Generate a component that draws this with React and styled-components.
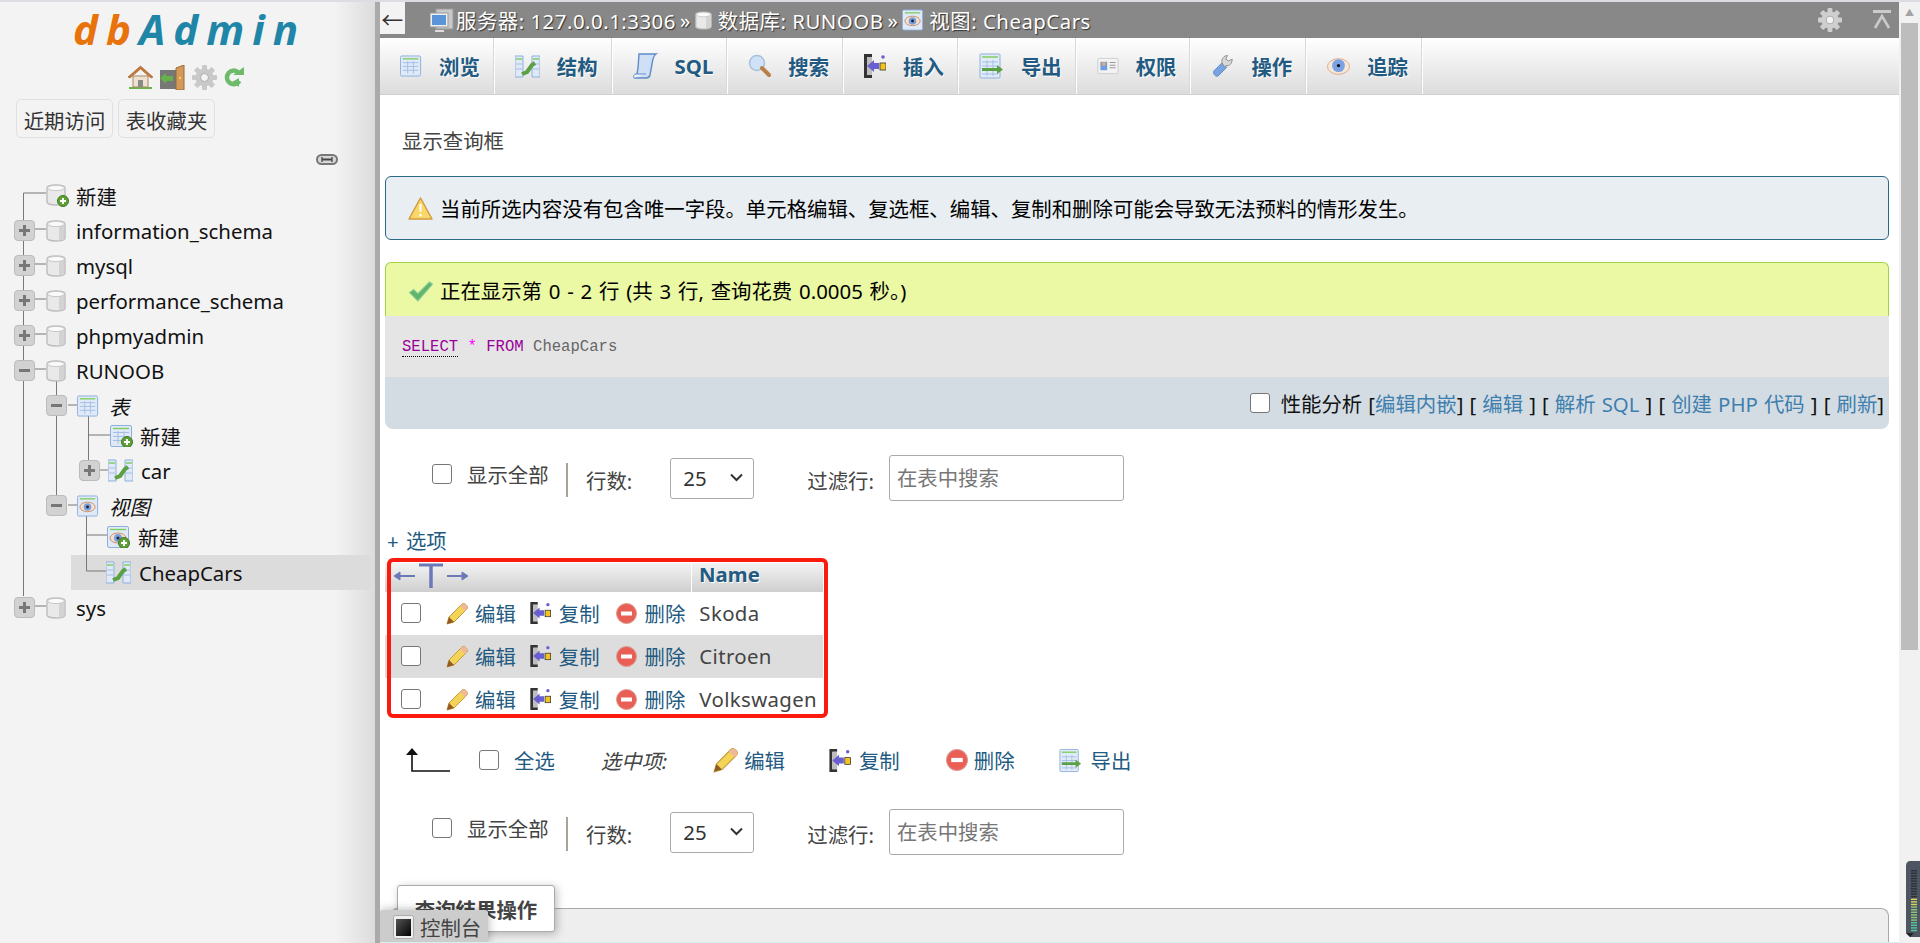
import React from "react";
import styled, { createGlobalStyle } from "styled-components";

const Global = createGlobalStyle`
  html, body { margin: 0; padding: 0; height: 100%; overflow: hidden; background: #fff; }
  * { box-sizing: border-box; }
  body { font-family: "Noto Sans", "Noto Sans CJK SC", sans-serif; font-size: 20.4px; color: #444; word-spacing: 2px; }
`;

const Page = styled.div`
  position: relative; width: 1920px; height: 943px; display: flex; overflow: hidden;
  border-top: 2px solid #dcdde0;
`;

/* ---------- navigation ---------- */
const Nav = styled.aside`
  flex: 0 0 380px; height: 100%; border-right: 5px solid #aaa;
  background: linear-gradient(to right, #f3f3f3 0, #f3f3f3 335px, #dcdcdc 375px);
  display: flex; flex-direction: column;
`;
const Logo = styled.div`
  height: 46px; margin-top: 4px; padding-left: 73px; display: flex; align-items: center;
  font: italic 700 42px/46px "Open Sans", sans-serif; letter-spacing: 8px; color: #1f86a8;
  span { color: #e8730c; }
`;
const NavIcons = styled.div`
  height: 26px; margin-top: 12px; padding-left: 128px; display: flex; align-items: center; gap: 7px;
`;
const NavTabs = styled.div`
  margin-top: 9px; padding-left: 16px; display: flex; gap: 5px;
`;
const NavTab = styled.div`
  width: 97px; height: 39px; border: 1px solid #e0e0e0; border-radius: 5px; padding-top: 2px;
  display: flex; align-items: center; justify-content: center; color: #333; background: #f3f3f3;
`;
const LinkRow = styled.div`
  height: 11px; margin-top: 16px; padding-left: 316px; display: flex;
`;
const Tree = styled.div`
  position: relative; isolation: isolate; margin-top: 13px; color: #111;
`;
const TreeLines = styled.svg`
  position: absolute; left: 0; top: 0; width: 375px; height: 700px; z-index: 0; pointer-events: none;
`;
const TreeRow = styled.div`
  position: relative; height: ${(p) => p.$short ?? 35}px; display: flex; align-items: center;
  padding-left: ${(p) => p.$indent}px; padding-bottom: ${(p) => (p.$short ? 4 : 0)}px;
  ${(p) => p.$active && `&::before { content: ""; position: absolute; left: 71px; width: 300px; top: 0; bottom: 0; background: #dcdcdc; z-index: -1; }`}
  & > * { position: relative; z-index: 1; }
`;
const Expander = styled.span`
  flex: none; width: 21px; height: 21px; margin-right: ${(p) => p.$gap ?? 11}px;
  border: 1px solid #bbb; border-radius: 4px; background: #d2d2d2;
  display: inline-flex; align-items: center; justify-content: center; position: relative;
  &::before { content: ""; width: 11px; height: 3px; background: #777; }
  ${(p) => p.$plus && `&::after { content: ""; position: absolute; width: 3px; height: 11px; background: #777; }`}
`;
const TreeLabel = styled.span`
  margin-left: ${(p) => p.$gap ?? 10}px; white-space: nowrap;
  font-style: ${(p) => (p.$italic ? "italic" : "normal")};
`;

/* ---------- main ---------- */
const Main = styled.main`
  flex: 1; min-width: 0; height: 100%; display: flex; flex-direction: column; overflow: hidden; position: relative;
`;
const TopBar = styled.header`
  flex: none; height: 36px; background: #888; display: flex; align-items: center; position: relative;
  color: #fff; text-shadow: 1px 1px 1px #333; white-space: nowrap; letter-spacing: .5px; word-spacing: 0;
`;
const BackBtn = styled.div`
  width: 25px; height: 32px; align-self: flex-start; background: #f3f3f3; color: #333; text-shadow: none;
  display: flex; align-items: center; justify-content: center; font-size: 22px; margin-right: 25px;
`;
const Crumb = styled.span`
  display: inline-flex; align-items: center; gap: ${(p) => p.$gap ?? 4}px; margin-right: 4px;
`;
const Sep = styled.span` margin-right: 4px; `;
const BarTools = styled.div`
  margin-left: auto; padding-right: 8px; display: flex; align-items: center; gap: 31px;
`;
const Tabs = styled.nav`
  flex: none; height: 57px; display: flex;
  background: linear-gradient(#fff, #dcdcdc); border-bottom: 1px solid #d0d0d0;
`;
const Tab = styled.a`
  display: flex; align-items: center; padding: 0 14px 0 20px; gap: 17px; border-right: 1px solid #fff;
  box-shadow: inset -1px 0 0 #d8d8d8;
  font-weight: 700; color: #235a81; text-shadow: 1px 1px 0 #fff;
`;
const Content = styled.div`
  flex: 1; min-height: 0; padding: 0 10px 0 5px; display: flex; flex-direction: column;
  & > * { flex: none; }
`;
const QueryToggle = styled.div`
  height: 30px; margin: 31px 0 0 17px; line-height: 30px; color: #444;
`;
const Alert = styled.div`
  height: 64px; margin-top: 20px; padding-left: 22px; display: flex; align-items: center; gap: 7px;
  background: #e8eef1; border: 1px solid #2b6a85; border-radius: 6px; color: #000;
`;
const ResultCard = styled.section` margin-top: 22px; `;
const Success = styled.div`
  height: 54px; padding-left: 22px; display: flex; align-items: center; gap: 7px; color: #000; word-spacing: 1.500px;
  background: #ebf8a4; border: 1px solid #a2d246; border-bottom: 0; border-radius: 6px 6px 0 0;
`;
const SqlBox = styled.div`
  height: 61px; padding-left: 17px; display: flex; align-items: center; background: #e5e5e5;
  font: 15.6px "Liberation Mono", monospace; white-space: pre; color: #666; word-spacing: 0;
`;
const Keyword = styled.span`
  color: #909;
  ${(p) => p.$dotted && `border-bottom: 1px dotted #000;`}
`;
const Star = styled.span` color: #f0f; `;
const SqlTools = styled.div`
  height: 52px; padding-right: 5px; display: flex; align-items: center; justify-content: flex-end; gap: 11px;
  background: #d3dce3; border-radius: 0 0 8px 8px; color: #111; white-space: pre; word-spacing: .8px;
`;
const ToolLink = styled.span` color: #3f7fae; `;
const Check = styled.span`
  flex: none; width: 20px; height: 20px; border: 1px solid #767676; border-radius: 3px; background: #fff;
  display: inline-block;
`;
const NavRow = styled.div`
  height: 46px; margin-top: ${(p) => p.$top}px; padding-left: 47px; display: flex; align-items: center;
`;
const ShowAll = styled.span`
  margin: 0 15px 8px 15px; width: 84px; align-self: center; white-space: nowrap; color: #444;
`;
const CheckHigh = styled(Check)` margin-bottom: 8px; `;
const Divider = styled.span`
  flex: none; width: 2px; height: 34px; margin: 4px 18px 0 0; background: #a9a39c;
`;
const FieldLabel = styled.span`
  margin-right: ${(p) => p.$right}px; margin-top: 3px; color: #444; white-space: nowrap;
`;
const SelectBox = styled.div`
  position: relative; width: 84px; height: 41px; margin-right: 53px; flex: none;
  svg { position: absolute; right: 11px; top: 15px; pointer-events: none; }
`;
const Select = styled.select`
  appearance: none; width: 100%; height: 100%; border: 1px solid #aaa; border-radius: 3px; background: #fff;
  padding-left: 12px; font: inherit; color: #333;
`;
const Search = styled.input`
  width: 235px; height: 46px; border: 1px solid #aaa; border-radius: 3px; padding: 0 7px; font: inherit; color: #333;
  &::placeholder { color: #777; }
`;
const Options = styled.a`
  height: 24px; margin-top: 28px; padding-left: 2px; line-height: 24px; color: #235a81; display: block;
`;
const TableWrap = styled.div`
  position: relative; width: 438px; margin-top: 10px;
`;
const RedFrame = styled.div`
  position: absolute; left: 2px; top: -5px; width: 441px; height: 160px;
  border: 4px solid #fb1a0e; border-radius: 6px; pointer-events: none;
`;
const HeadRow = styled.div`
  height: 29px; display: flex; background: linear-gradient(#f3f3f3, #cfcfcf);
`;
const PointerCell = styled.div`
  flex: 0 0 307px; padding-left: 9px; border-right: 1px solid #fff; overflow: visible;
`;
const NameHead = styled.div`
  padding-left: 7px; font-weight: 700; color: #235a81; text-shadow: 1px 1px 0 #fff; line-height: 23px;
`;
const DataRow = styled.div`
  height: 43px; padding-left: 16px; display: flex; align-items: center;
  background: ${(p) => (p.$odd ? "#ddd" : "#fff")};
`;
const RowCheck = styled(Check)` margin: 0 25px 2px 0; `;
const RowAction = styled.a`
  display: inline-flex; align-items: center; gap: ${(p) => p.$gap}px; margin-right: ${(p) => p.$right}px;
  color: #235a81; white-space: nowrap; margin-bottom: 1px;
`;
const NameCell = styled.span` margin-left: 1px; color: #444; margin-bottom: 1px; white-space: nowrap; letter-spacing: .35px; `;
const BulkRow = styled.div`
  height: 26px; margin-top: 26px; padding-left: 20px; display: flex; align-items: center;
`;
const SelectAll = styled.a` margin: 0 46px 0 15px; color: #235a81; white-space: nowrap; `;
const SelectedLabel = styled.i` margin-right: 46px; color: #444; white-space: nowrap; `;
const BulkAction = styled.a`
  display: inline-flex; align-items: center; gap: ${(p) => p.$gap}px; margin-right: ${(p) => p.$right}px;
  color: #235a81; white-space: nowrap;
`;
const FieldBox = styled.div`
  position: relative; height: 60px; margin: 53px 0 0 5px; background: #eee;
  border: 1px solid #aaa; border-bottom: 0; border-radius: 8px 8px 0 0;
`;
const Legend = styled.div`
  position: absolute; left: 6px; top: -24px; width: 158px; height: 47px; background: #fff;
  border: 1px solid #aaa; border-radius: 3px; box-shadow: 2px 2px 8px rgba(0,0,0,.25);
  display: flex; align-items: center; justify-content: center; font-weight: 700; color: #444; white-space: nowrap;
`;
const ConsoleTab = styled.div`
  position: absolute; left: 0; bottom: 0; width: 108px; height: 33px; background: #ccc;
  border-radius: 3px 3px 0 0; box-shadow: 0 0 10px rgba(0,0,0,.3);
  display: flex; align-items: center; padding-left: 13px; gap: 6px; color: #444; white-space: nowrap;
`;
const ScrollBar = styled.div`
  flex: 0 0 21px; height: 100%; background: #f1f1f1; padding: 0 2px 0 2px; display: flex; flex-direction: column; align-items: stretch;
`;
const ScrollArrow = styled.div`
  height: 21px; display: flex; align-items: center; justify-content: center; color: #a3a3a3; font-size: 9px;
`;
const ScrollThumb = styled.div` height: 627px; background: #bdbdbd; `;
const Meter = styled.svg`
  position: absolute; right: 0; bottom: 6px; width: 14px; height: 76px;
`;
const BottomEdge = styled.div`
  position: absolute; left: 380px; right: 21px; bottom: 0; height: 1px; background: #d6eeee;
`;

/* ---------- icons ---------- */
const Db = ({ s = 20 }) => (
  <svg width={s} height={s + 2} viewBox="0 0 20 22" style={{ flex: "none" }}>
    <path d="M1 4c0-4 18-4 18 0v14c0 4-18 4-18 0z" fill="#e9e9e9" stroke="#bdbdbd" strokeWidth="1.4" />
    <path d="M13 5c3 0 5-.4 5-1v14c0 1-2 2-5 2.400z" fill="#d3d3d3" />
    <ellipse cx="10" cy="4" rx="8.500" ry="2.600" fill="#fafafa" stroke="#c8c8c8" />
  </svg>
);
const Badge = () => (
  <g>
    <circle cx="17" cy="17" r="5.500" fill="#5fa036" stroke="#3f7a22" />
    <path d="M14 17h6M17 14v6" stroke="#fff" strokeWidth="2" />
  </g>
);
const DbNew = () => (
  <svg width="24" height="24" viewBox="0 0 24 24" style={{ flex: "none", marginRight: "-4px" }}>
    <path d="M1 4c0-4 18-4 18 0v14c0 4-18 4-18 0z" fill="#e9e9e9" stroke="#bdbdbd" strokeWidth="1.4" />
    <ellipse cx="10" cy="4" rx="8.500" ry="2.600" fill="#fafafa" stroke="#c8c8c8" />
    <Badge />
  </svg>
);
const Grid = ({ w = 22, h = 22 }) => (
  <g>
    <rect x=".5" y=".5" width={w - 1} height={h - 1} rx="1.500" fill="#dfe9f7" stroke="#8db0dd" />
    <path d={`M3 3.500H${w - 3}`} stroke="#7fcf5f" strokeWidth="1.400" />
    <path d={`M3 7.500H${w - 3}M3 11.500H${w - 3}M3 15.500H${w - 3}M8 6V${h - 3}M14 6V${h - 3}`} stroke="#a5bfe4" />
  </g>
);
const TableIcon = ({ badge }) => (
  <svg width={badge ? 23 : 22} height="22" viewBox="0 0 23 22" style={{ flex: "none" }}>
    <Grid />
    {badge && <Badge />}
  </svg>
);
const Struct = ({ w = 25, h = 23 }) => (
  <svg width={w} height={h} viewBox="0 0 25 23" style={{ flex: "none" }}>
    <path d="M0 1h8v21H0z" fill="#dfe9f7" stroke="#8db0dd" />
    <path d="M17 1h8v21h-8z" fill="#dfe9f7" stroke="#8db0dd" />
    <path d="M1 4h6M18 4h6" stroke="#7fcf5f" strokeWidth="1.400" />
    <path d="M1 9h6M1 14h6M18 9h6M18 14h6" stroke="#a5bfe4" />
    <path d="M7 19l5-2 5-7 3-2" fill="none" stroke="#5aa044" strokeWidth="4" />
  </svg>
);
const EyeShape = ({ cx = 11, cy = 11, rx = 9, ry = 6 }) => (
  <g>
    <ellipse cx={cx} cy={cy} rx={rx} ry={ry} fill="#f4dfce" stroke="#c9936d" />
    <circle cx={cx} cy={cy} r={ry - 1} fill="#7aa0dc" />
    <circle cx={cx} cy={cy} r="1.500" fill="#223" />
  </g>
);
const ViewIcon = ({ badge }) => (
  <svg width={badge ? 23 : 22} height="22" viewBox="0 0 23 22" style={{ flex: "none" }}>
    <rect x=".5" y=".5" width="21" height="21" rx="1.500" fill="#dfe9f7" stroke="#8db0dd" />
    <path d="M3 3.500H19" stroke="#7fcf5f" strokeWidth="1.400" />
    <EyeShape cy={12} rx={8} ry={5} />
    {badge && <Badge />}
  </svg>
);
const EyeIcon = () => (
  <svg width="23" height="19" viewBox="0 0 25 20" style={{ flex: "none" }}>
    <ellipse cx="12.500" cy="10" rx="12" ry="8.500" fill="#f7e7d8" stroke="#d9a888" />
    <circle cx="12.500" cy="9" r="7" fill="#7ba3e3" />
    <circle cx="12.500" cy="9" r="1.800" fill="#111" />
  </svg>
);
const Magnifier = () => (
  <svg width="23" height="24" viewBox="0 0 23 24" style={{ flex: "none" }}>
    <circle cx="9" cy="9" r="7.500" fill="#cfe2f7" stroke="#a8c0dc" strokeWidth="1.500" />
    <path d="M14 14l7 7" stroke="#b9814a" strokeWidth="4" strokeLinecap="round" />
  </svg>
);
const Scroll = () => (
  <svg width="25" height="26" viewBox="0 0 25 26" style={{ flex: "none" }}>
    <path d="M6 1h17c-3 2-3 5-4 10l-2 11c-.5 2-2 3-4 3H1c3-1 3-4 4-10z" fill="#cfe0f6" stroke="#5f8cc8" strokeWidth="1.400" />
    <path d="M1 25c-1-2 0-4 2-4h10" fill="#eef4fc" stroke="#5f8cc8" />
  </svg>
);
const InsertIcon = ({ w = 22, h = 26 }) => (
  <svg width={w} height={h} viewBox="0 0 22 26" style={{ flex: "none" }}>
    <path d="M0 1h8v3H3v18h5v3H0z" fill="#333" />
    <path d="M3 4h5v18H3z" fill="#bdbdbd" />
    <path d="M3 13l7-6v3h5v6h-5v3z" fill="#6a5fd0" />
    <rect x="16" y="10" width="6" height="7" fill="#f3c320" stroke="#333" strokeWidth=".8" />
    <circle cx="19" cy="4" r="1.800" fill="#6a5fd0" />
  </svg>
);
const ExportIcon = ({ w = 25, h = 26 }) => (
  <svg width={w} height={h} viewBox="0 0 25 26" style={{ flex: "none" }}>
    <rect x="1" y="1" width="20" height="24" rx="1" fill="#e2ebf8" stroke="#8db0dd" />
    <path d="M3 4h16" stroke="#7fcf5f" strokeWidth="1.500" />
    <path d="M3 9h16M3 13h16M3 21h16M8 7v16M14 7v16" stroke="#a5bfe4" />
    <path d="M3 15h15v-3l6 4.500-6 4.500v-3H3z" fill="#5aa044" />
  </svg>
);
const CardIcon = () => (
  <svg width="22" height="22" viewBox="0 0 26 24" style={{ flex: "none" }}>
    <rect x="1" y="3" width="24" height="18" rx="1.500" fill="#f3f3f3" stroke="#c9c9c9" />
    <rect x="4" y="7" width="8" height="10" fill="#6f9ee0" />
    <circle cx="8" cy="9.500" r="2.500" fill="#e4a878" />
    <path d="M15 8h7M15 11h7M15 14h7" stroke="#999" strokeWidth="1.200" />
  </svg>
);
const Wrench = () => (
  <svg width="23" height="25" viewBox="0 0 25 26" style={{ flex: "none" }}>
    <path d="M3 18L12 9l5 5-9 9c-3 2-6-2-5-5z" fill="#78a4e2" stroke="#5a86c6" />
    <path d="M12 9c-1-4 2-8 6-8l-2 4 3 2 4-2c0 5-3 8-7 7l-1 2z" fill="#d8d8d8" stroke="#8b8b8b" />
  </svg>
);
const Pencil = ({ w = 23, h = 23 }) => (
  <svg width={w} height={h} viewBox="0 0 23 23" style={{ flex: "none" }}>
    <path d="M1 22l2-7L16 2c2-2 7 2 5 5L8 20z" fill="#f4d458" stroke="#c69a37" />
    <path d="M16 2c2-2 7 2 5 5l-2 2-5-5z" fill="#eeb99a" />
    <path d="M1 22l2-7 5 5z" fill="#8f5a24" />
  </svg>
);
const Del = ({ s = 21 }) => (
  <svg width={s} height={s} viewBox="0 0 21 21" style={{ flex: "none" }}>
    <circle cx="10.500" cy="10.500" r="10" fill="#ea5f55" stroke="#d99a90" />
    <rect x="5" y="8.500" width="11" height="4" fill="#fff" />
  </svg>
);
const Warn = () => (
  <svg width="25" height="23" viewBox="0 0 25 23" style={{ flex: "none" }}>
    <path d="M12.500 1L24 22H1z" fill="#f9d86a" stroke="#d59a40" strokeWidth="1.500" strokeLinejoin="round" />
    <path d="M11.300 7h2.400l-.4 8h-1.600zM11.300 17h2.400v2.400h-2.400z" fill="#fff" />
  </svg>
);
const Ok = () => (
  <svg width="25" height="21" viewBox="0 0 23 20" style={{ flex: "none", marginTop: "3px" }}>
    <path d="M1 11l4-3 4 4L20 1l3 2L9 19z" fill="#5fb56a" stroke="#8fc99a" />
  </svg>
);
const Home = () => (
  <svg width="25" height="25" viewBox="0 0 25 25" style={{ flex: "none" }}>
    <path d="M1 24h23v-2H1z" fill="#6bb24a" />
    <path d="M5 11h15v11H5z" fill="#efe2cf" stroke="#a78a6a" />
    <path d="M10 15h5v7h-5z" fill="#8a8a8a" />
    <path d="M0 12L12.500 1 25 12l-2 1-10.500-9L2 13z" fill="#c77b3a" stroke="#9a5a24" strokeWidth=".6" />
  </svg>
);
const ExitDoor = () => (
  <svg width="25" height="25" viewBox="0 0 25 25" style={{ flex: "none" }}>
    <rect x="0" y="5" width="16" height="19" fill="#777" />
    <path d="M16 3l8-3v25h-8z" fill="#d29a5a" stroke="#9a6a32" />
    <circle cx="20" cy="13" r="1.200" fill="#f5d050" />
    <path d="M0 13l6-5v3h7v5H6v3z" fill="#65b04a" />
  </svg>
);
const Gear = ({ s = 25, c = "#c9c9c9" }) => (
  <svg width={s} height={s} viewBox="0 0 25 25" style={{ flex: "none" }}>
    <g fill={c}>
      {[0, 45, 90, 135].map((a) => (
        <rect key={a} x="10" y="0" width="5" height="25" rx="1" transform={`rotate(${a} 12.500 12.500)`} />
      ))}
      <circle cx="12.500" cy="12.500" r="9" />
    </g>
    <circle cx="12.500" cy="12.500" r="4" fill="#f3f3f3" stroke="#aaa" />
  </svg>
);
const Reload = () => (
  <svg width="20" height="25" viewBox="0 0 20 25" style={{ flex: "none" }}>
    <path d="M14.500 7.500A6.800 6.800 0 1 0 15.500 16" fill="none" stroke="#6dbb6a" strokeWidth="4.500" />
    <path d="M9 10h11V2z" fill="#6dbb6a" />
    <path d="M8 17l7-4v9z" fill="#6dbb6a" />
  </svg>
);
const Chain = () => (
  <svg width="22" height="11" viewBox="0 0 22 11">
    <rect x="1" y="1" width="20" height="9" rx="4.500" fill="#d8d8d8" stroke="#777" strokeWidth="2" />
    <path d="M6 5.500h10" stroke="#444" strokeWidth="2" />
    <path d="M6 3v5M16 3v5" stroke="#555" strokeWidth="1.500" />
  </svg>
);
const Server = () => (
  <svg width="24" height="25" viewBox="0 0 24 25" style={{ flex: "none" }}>
    <rect x="6" y="1" width="17" height="20" fill="#c9c9c9" stroke="#999" />
    <rect x="0" y="5" width="18" height="14" fill="#eee" stroke="#999" />
    <rect x="2" y="7" width="14" height="10" fill="#5b95d8" />
    <path d="M5 23h9" stroke="#ddd" strokeWidth="2" />
  </svg>
);
const Collapse = () => (
  <svg width="18" height="20" viewBox="0 0 18 20" style={{ flex: "none" }}>
    <path d="M0 1.500h18" stroke="#ccc" strokeWidth="3" />
    <path d="M2 18L9 6l7 12" fill="none" stroke="#ccc" strokeWidth="2.500" />
  </svg>
);
const ColPointer = () => (
  <svg width="74" height="26" viewBox="0 0 74 26" style={{ display: "block" }}>
    <g stroke="#6c79b8" fill="#6c79b8">
      <path d="M1 13h20" strokeWidth="2" fill="none" />
      <path d="M0 13l6-4v8z" />
      <path d="M53 13h20" strokeWidth="2" fill="none" />
      <path d="M74 13l-6-4v8z" />
      <path d="M25 2h24" strokeWidth="3" fill="none" />
      <path d="M37 2v23" strokeWidth="3.500" fill="none" />
    </g>
  </svg>
);
const ArrowLtr = () => (
  <svg width="46" height="24" viewBox="0 0 46 24" style={{ flex: "none", marginRight: "28px" }}>
    <path d="M7 7v16h38" fill="none" stroke="#111" strokeWidth="1.600" />
    <path d="M7 0l6 7H1z" fill="#111" />
  </svg>
);
const ConsoleIcon = () => (
  <svg width="21" height="24" viewBox="0 0 21 24" style={{ flex: "none" }}>
    <defs>
      <linearGradient id="cg" x1="0" y1="0" x2="1" y2="1"><stop offset="0" stopColor="#555" /><stop offset="1" stopColor="#000" /></linearGradient>
    </defs>
    <rect x=".5" y=".5" width="20" height="23" rx="2" fill="#eee" stroke="#aaa" />
    <rect x="3" y="4" width="15" height="17" fill="url(#cg)" />
  </svg>
);
const Chevron = () => (
  <svg width="13" height="9" viewBox="0 0 13 9"><path d="M1 1.500l5.500 5.500 5.500-5.500" fill="none" stroke="#333" strokeWidth="2" /></svg>
);

const lines = [
  "M23.500 195V598", "M23.500 195H46", "M35 231H46", "M35 266H46", "M35 301H46", "M35 336H46", "M35 371H46", "M35 608H46",
  "M56.500 382V497", "M68 407H77", "M68 507H77", "M88.500 417V462", "M88.500 437H110", "M100 472H108",
  "M86.500 518V573", "M86.500 537H107", "M86.500 573H106",
];

const Row = ({ indent, exp, gapE, gapL, icon, label, italic, active, short }) => (
  <TreeRow $indent={indent} $active={active} $short={short}>
    {exp && <Expander $plus={exp === "+"} $gap={gapE} />}
    {icon}
    <TreeLabel $italic={italic} $gap={gapL}>{label}</TreeLabel>
  </TreeRow>
);

const Pager = ({ top }) => (
  <NavRow $top={top}>
    <CheckHigh />
    <ShowAll>显示全部</ShowAll>
    <Divider />
    <FieldLabel $right={38}>行数:</FieldLabel>
    <SelectBox>
      <Select defaultValue="25"><option>25</option><option>50</option></Select>
      <Chevron />
    </SelectBox>
    <FieldLabel $right={15}>过滤行:</FieldLabel>
    <Search placeholder="在表中搜索" />
  </NavRow>
);

const cars = ["Skoda", "Citroen", "Volkswagen"];

export default function App() {
  return (
    <Page>
      <Global />
      <Nav>
        <Logo><span>db</span>Admin</Logo>
        <NavIcons><Home /><ExitDoor /><Gear /><Reload /></NavIcons>
        <NavTabs><NavTab>近期访问</NavTab><NavTab>表收藏夹</NavTab></NavTabs>
        <LinkRow><Chain /></LinkRow>
        <Tree>
          <TreeLines viewBox="0 180 375 700">
            <path d={lines.join("")} stroke="#777" strokeWidth="1" fill="none" />
          </TreeLines>
          <Row indent={46} icon={<DbNew />} label="新建" />
          <Row indent={14} exp="+" icon={<Db />} label="information_schema" />
          <Row indent={14} exp="+" icon={<Db />} label="mysql" />
          <Row indent={14} exp="+" icon={<Db />} label="performance_schema" />
          <Row indent={14} exp="+" icon={<Db />} label="phpmyadmin" />
          <Row indent={14} exp="-" icon={<Db />} label="RUNOOB" />
          <Row indent={46} exp="-" gapE={10} icon={<TableIcon />} label="表" italic gapL={10} />
          <Row indent={110} short={30} icon={<TableIcon badge />} label="新建" gapL={7} />
          <Row indent={79} exp="+" gapE={8} icon={<Struct />} label="car" gapL={8} />
          <Row indent={46} exp="-" gapE={10} icon={<ViewIcon />} label="视图" italic gapL={10} />
          <Row indent={107} short={32} icon={<ViewIcon badge />} label="新建" gapL={8} />
          <Row indent={106} icon={<Struct />} label="CheapCars" active gapL={8} />
          <Row indent={14} exp="+" icon={<Db />} label="sys" />
        </Tree>
      </Nav>
      <Main>
        <TopBar>
          <BackBtn>←</BackBtn>
          <Crumb $gap={2}><Server />服务器: 127.0.0.1:3306</Crumb>
          <Sep>»</Sep>
          <Crumb $gap={6}><Db s={17} />数据库: RUNOOB</Crumb>
          <Sep>»</Sep>
          <Crumb $gap={5}><ViewIcon />视图: CheapCars</Crumb>
          <BarTools><Gear s={24} c="#cfcfcf" /><Collapse /></BarTools>
        </TopBar>
        <Tabs>
          <Tab><TableIcon />浏览</Tab>
          <Tab><Struct />结构</Tab>
          <Tab><Scroll />SQL</Tab>
          <Tab><Magnifier />搜索</Tab>
          <Tab><InsertIcon />插入</Tab>
          <Tab><ExportIcon />导出</Tab>
          <Tab><CardIcon />权限</Tab>
          <Tab><Wrench />操作</Tab>
          <Tab><EyeIcon />追踪</Tab>
        </Tabs>
        <Content>
          <QueryToggle>显示查询框</QueryToggle>
          <Alert><Warn />当前所选内容没有包含唯一字段。单元格编辑、复选框、编辑、复制和删除可能会导致无法预料的情形发生。</Alert>
          <ResultCard>
            <Success><Ok />正在显示第 0 - 2 行 (共 3 行, 查询花费 0.0005 秒。)</Success>
            <SqlBox><span><Keyword $dotted>SELECT</Keyword> <Star>*</Star> <Keyword>FROM</Keyword> CheapCars</span></SqlBox>
            <SqlTools>
              <Check />
              <span>性能分析 [<ToolLink>编辑内嵌</ToolLink>] [ <ToolLink>编辑</ToolLink> ] [ <ToolLink>解析 SQL</ToolLink> ] [ <ToolLink>创建 PHP 代码</ToolLink> ] [ <ToolLink>刷新</ToolLink>]</span>
            </SqlTools>
          </ResultCard>
          <Pager top={26} />
          <Options>+ 选项</Options>
          <TableWrap>
            <HeadRow>
              <PointerCell><ColPointer /></PointerCell>
              <NameHead>Name</NameHead>
            </HeadRow>
            {cars.map((c, i) => (
              <DataRow key={c} $odd={i === 1}>
                <RowCheck />
                <RowAction $gap={6} $right={14}><Pencil />编辑</RowAction>
                <RowAction $gap={8} $right={16}><InsertIcon w={21} h={24} />复制</RowAction>
                <RowAction $gap={8} $right={13}><Del />删除</RowAction>
                <NameCell>{c}</NameCell>
              </DataRow>
            ))}
            <RedFrame />
          </TableWrap>
          <BulkRow>
            <ArrowLtr />
            <Check />
            <SelectAll>全选</SelectAll>
            <SelectedLabel>选中项:</SelectedLabel>
            <BulkAction $gap={5} $right={44}><Pencil w={26} h={26} />编辑</BulkAction>
            <BulkAction $gap={8} $right={46}><InsertIcon w={22} h={25} />复制</BulkAction>
            <BulkAction $gap={6} $right={44}><Del s={22} />删除</BulkAction>
            <BulkAction $gap={9} $right={0}><ExportIcon w={23} h={25} />导出</BulkAction>
          </BulkRow>
          <Pager top={36} />
          <FieldBox><Legend>查询结果操作</Legend></FieldBox>
        </Content>
        <ConsoleTab><ConsoleIcon />控制台</ConsoleTab>
      </Main>
      <ScrollBar>
        <ScrollArrow>▲</ScrollArrow>
        <ScrollThumb />
      </ScrollBar>
      <Meter viewBox="0 0 14 76">
        <path d="M0 72V4c0-2 2-4 4-4h10v76H4z" fill="#4e5562" />
        {Array.from({ length: 24 }, (_, i) => (
          <rect key={i} x="5" y={9 + i * 2.600} width="6" height="1.400"
            fill={i < 11 ? "#2c3038" : i < 14 ? "#d8d860" : i < 20 ? "#8fc878" : "#56c8a0"} />
        ))}
        <path d="M0 72h8l-4 4z" fill="#222" />
      </Meter>
      <BottomEdge />
    </Page>
  );
}
